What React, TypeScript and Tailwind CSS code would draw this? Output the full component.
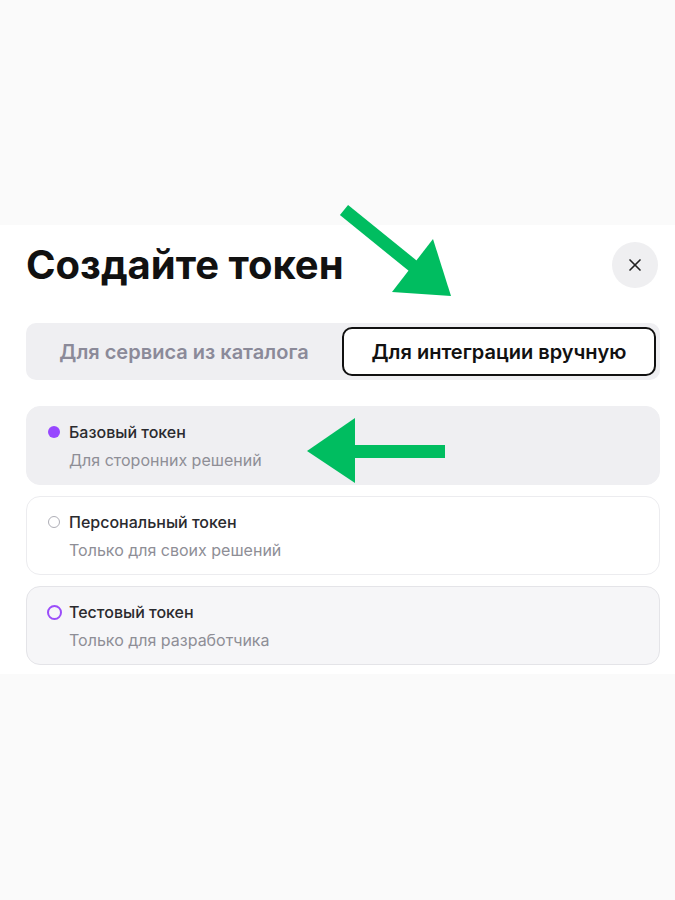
import { X } from 'lucide-react';

type Variant = 'filled' | 'empty' | 'outline';

const options: { title: string; hint: string; variant: Variant; card: string }[] = [
    { title: 'Базовый токен', hint: 'Для сторонних решений', variant: 'filled', card: 'bg-[#efeff2] border-[#efeff2]' },
    { title: 'Персональный токен', hint: 'Только для своих решений', variant: 'empty', card: 'bg-white border-[#ececef]' },
    { title: 'Тестовый токен', hint: 'Только для разработчика', variant: 'outline', card: 'bg-[#f6f6f8] border-[#e4e4e8]' },
];

const Marker = ({ variant }: { variant: Variant }) => {
    if (variant === 'filled') {
        return <span className="shrink-0 w-3 h-3 rounded-full bg-[#9747ff]" />;
    }
    if (variant === 'outline') {
        return <span className="shrink-0 w-[15px] h-[15px] rounded-full border-[2.5px] border-[#9b4dfa]" />;
    }
    return <span className="shrink-0 w-3 h-3 rounded-full border-[1.5px] border-[#aeaeb6]" />;
};

export default function App() {
    return (
        <div className="relative min-h-[900px] bg-[#fafafa] font-['Inter',sans-serif]">
            <div className="h-[225px]" />

            <div className="bg-white pl-[26px] pr-[15px] pt-[17px] pb-[9px]">
                {/* Header */}
                <div className="flex items-center justify-between pr-[2px]">
                    <h1 className="text-[40px] leading-none font-bold text-[#111]">Создайте токен</h1>
                    <button className="w-[46px] h-[46px] rounded-full bg-[#efeff1] flex items-center justify-center text-[#222]">
                        <X size={20} strokeWidth={2} />
                    </button>
                </div>

                {/* Tabs */}
                <div className="mt-[35px] grid grid-cols-[1fr_314px] gap-1 p-1 rounded-[10px] bg-[#efeff2] h-[57px]">
                    <div className="flex items-center justify-center text-[20px] font-semibold text-[#8b8a99]">
                        Для сервиса из каталога
                    </div>
                    <div className="flex items-center justify-center rounded-[10px] bg-white border-2 border-[#111] text-[20px] font-semibold text-[#111]">
                        Для интеграции вручную
                    </div>
                </div>

                {/* Options */}
                <div className="mt-[26px] flex flex-col gap-[11px]">
                    {options.map(o => (
                        <div key={o.title} className={`rounded-[14px] border pl-[21px] pt-[13px] pb-[12px] ${o.card}`}>
                            <div className="flex items-center gap-[9px] h-6">
                                <span className="shrink-0 w-3 flex items-center justify-center">
                                    <Marker variant={o.variant} />
                                </span>
                                <span className="text-[16px] font-medium text-[#2a2a2e]">{o.title}</span>
                            </div>
                            <div className="mt-1 pl-[21px] text-[16px] leading-6 text-[#8e8e96]">{o.hint}</div>
                        </div>
                    ))}
                </div>
            </div>

            {/* Annotation arrows */}
            <svg className="absolute inset-0 pointer-events-none" width="675" height="900" viewBox="0 0 675 900">
                <line x1="344" y1="210" x2="418" y2="270" stroke="#00bd60" strokeWidth="13" />
                <polygon points="451,296 392,292 433,239" fill="#00bd60" />
                <rect x="350" y="445" width="95" height="13" fill="#00bd60" />
                <polygon points="307,451 355,418 355,483" fill="#00bd60" />
            </svg>
        </div>
    );
}
